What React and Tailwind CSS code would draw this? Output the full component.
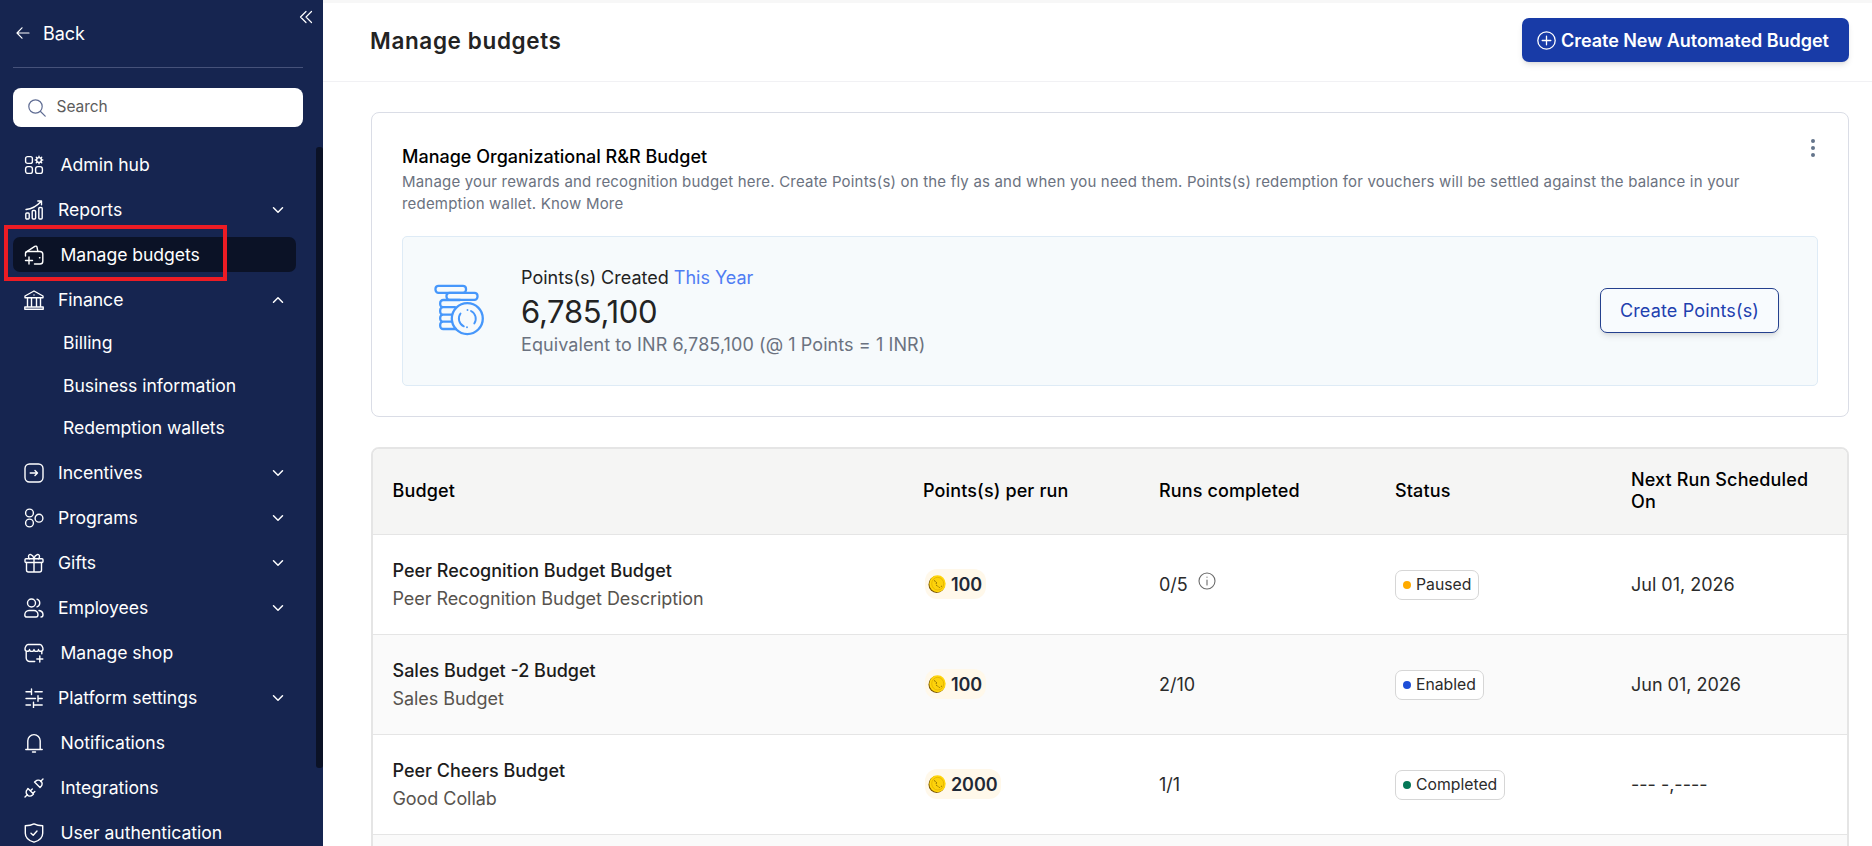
const Svg = ({ children, className = 'size-5', w = 1.4, box = '0 0 20 20' }) => (
  <svg
    viewBox={box}
    className={`shrink-0 ${className}`}
    fill="none"
    stroke="currentColor"
    strokeWidth={w}
    strokeLinecap="round"
    strokeLinejoin="round"
  >
    {children}
  </svg>
);

const icons = {
  hub: (
    <>
      <rect x="1.6" y="1.6" width="6.8" height="6.8" rx="2" />
      <rect x="1.6" y="11.6" width="6.8" height="6.8" rx="2.2" />
      <rect x="11.6" y="11.6" width="6.8" height="6.8" rx="2.2" />
      <circle cx="15" cy="5" r="2.4" />
      <path d="M15 1.2v1M15 7.800v1M11.200 5h1M17.800 5h1M12.300 2.300l.7.700M17 7l.7.700M17.700 2.300l-.7.700M13 7l-.7.700" />
    </>
  ),
  reports: (
    <>
      <rect x="1.800" y="13" width="3.400" height="6" rx="1" />
      <rect x="8.200" y="10.500" width="3.400" height="8.500" rx="1" />
      <rect x="14.800" y="7.500" width="3.400" height="11.500" rx="1" />
      <path d="M2 9.500c6-.5 10.500-3 15-8M13.800 1h3.700v3.700" />
    </>
  ),
  wallet: (
    <>
      <path d="M1.500 11V8.500a2 2 0 0 1 2-2h12.500a2.800 2.800 0 0 1 2.800 2.800v6.900a2.800 2.800 0 0 1-2.800 2.800h-5.500" />
      <path d="M2 7.200L10.800 1.400c1-.6 2-.2 2.200.8l.8 4" />
      <path d="M1.500 15.500h7M5 12v7M15.500 12.800h.4" />
    </>
  ),
  bank: (
    <path d="M1 6L10 1l9 5v1.800H1zM.8 19.200V17h18.400v2.200zM3.500 8v8.500M7.500 8v8.500M12.500 8v8.500M16.500 8v8.500M10 5h.01" />
  ),
  incentives: (
    <>
      <rect x="1" y="1" width="18" height="18" rx="4.500" />
      <path d="M6.200 10h7.300M11 7.500l2.500 2.500-2.500 2.500" />
    </>
  ),
  programs: (
    <>
      <circle cx="5.500" cy="5" r="3.900" />
      <circle cx="5.500" cy="15" r="3.900" />
      <circle cx="15" cy="10.200" r="3.900" />
    </>
  ),
  gift: (
    <>
      <rect x="1" y="5.800" width="18" height="3.700" rx="1" />
      <path d="M2.500 9.500v7.500a2 2 0 0 0 2 2h11a2 2 0 0 0 2-2V9.500M10 5.800v13.200M10 5.500c-1-4-5.500-5.500-5.500-2 0 1 .5 2 1 2.300M10 5.500c1-4 5.500-5.500 5.500-2 0 1-.5 2-1 2.300" />
    </>
  ),
  users: (
    <>
      <circle cx="7.500" cy="5" r="4" />
      <path d="M13 1.200a4 4 0 0 1 0 7.600M5 12.500h5c2.200 0 4 2 4 4.200 0 1.300-.8 2.300-2 2.300H2.800c-1.100 0-2-.9-2-2.100 0-2.400 1.900-4.400 4.200-4.400zM15 12.500c2.200.3 4 2.200 4 4.300 0 1.200-.9 2.200-2 2.200" />
    </>
  ),
  shop: (
    <path d="M4 1.500h12c1.500 0 3 3 3 4.500 0 3-4.500 3-4.500.5 0 2.500-4.500 2.500-4.500 0 0 2.500-4.500 2.500-4.500 0C5.500 9 1 9 1 6c0-1.500 1.500-4.500 3-4.500zM2.200 8.500V15a3.500 3.500 0 0 0 3.500 3.500h5M17.800 8.500v2.200M15.800 13v6M12.800 16h6" />
  ),
  sliders: (
    <path d="M2 3.800h5.500M7.500 1v5.600M11 3.800h7.200M2 10.500h9.500M14 10.500h4.200M14 7.700v5.600M2 17h4.500M9.500 14.200v5.600M9.500 17h8.700" />
  ),
  bell: (
    <path d="M1.800 16.500h16.400M3.800 16.300V7.800a6.200 6.200 0 0 1 12.400 0v8.500M8.500 19h3" />
  ),
  plug: (
    <path d="M1 19l2.500-2.500M16.500 3.500L19 1M4 10.500l5.500 5.500-1 1c-1.500 1.500-4 1.500-5.300 0s-1.500-4 0-5.300zM10.500 4l5.500 5.500 1-1c1.500-1.500 1.500-4 0-5.300s-4-1.500-5.300 0zM6.500 12.800L8.300 11M9 15.200l1.800-1.800" />
  ),
  shield: (
    <path d="M10 .9c2.500 1.300 5.500 1.800 8.700 1.800v7.500c0 4.500-3.700 7.500-8.700 9-5-1.500-8.700-4.500-8.700-9V2.700C4.500 2.700 7.500 2.200 10 .9zM7 10.200l2.200 2L13 8" />
  ),
};

const Chevron = ({ up }) => (
  <Svg className="ml-auto w-3 h-2" box="0 0 12 8" w={1.5}>
    <path d={up ? 'M1.500 6.200L6 1.800l4.500 4.400' : 'M1.500 1.800L6 6.200l4.500-4.400'} />
  </Svg>
);

const navItems = [
  { label: 'Admin hub', icon: 'hub' },
  { label: 'Reports', icon: 'reports', group: true },
  { label: 'Manage budgets', icon: 'wallet', active: true },
  {
    label: 'Finance',
    icon: 'bank',
    group: true,
    children: ['Billing', 'Business information', 'Redemption wallets'],
  },
  { label: 'Incentives', icon: 'incentives', group: true },
  { label: 'Programs', icon: 'programs', group: true },
  { label: 'Gifts', icon: 'gift', group: true },
  { label: 'Employees', icon: 'users', group: true },
  { label: 'Manage shop', icon: 'shop' },
  { label: 'Platform settings', icon: 'sliders', group: true },
  { label: 'Notifications', icon: 'bell' },
  { label: 'Integrations', icon: 'plug' },
  { label: 'User authentication', icon: 'shield' },
];

const budgets = [
  { name: 'Peer Recognition Budget Budget', desc: 'Peer Recognition Budget Description', points: '100', runs: '0/5', info: true, status: 'Paused', dot: 'bg-[#ffab00]', next: 'Jul 01, 2026' },
  { name: 'Sales Budget -2 Budget', desc: 'Sales Budget', points: '100', runs: '2/10', status: 'Enabled', dot: 'bg-[#1d4ed8]', next: 'Jun 01, 2026' },
  { name: 'Peer Cheers Budget', desc: 'Good Collab', points: '2000', runs: '1/1', status: 'Completed', dot: 'bg-[#047857]', next: '--- -,----' },
];

const columns = 'grid grid-cols-[530.5px_236px_236px_236px_1fr] items-center pl-[19.5px]';

const NavItem = ({ item }) => (
  <>
    <div
      className={`relative ml-[13px] w-[283px] h-[35px] mb-[10px] rounded-[7px] pl-[11px] pr-[12px] flex items-center ${
        item.active ? 'bg-[#0b1226]' : ''
      }`}
    >
      <Svg>{icons[item.icon]}</Svg>
      <span className={`mt-[2px] ${item.group ? 'ml-[14px]' : 'ml-[16.5px]'}`}>{item.label}</span>
      {item.group && <Chevron up={!!item.children} />}
      {item.active && (
        <div className="absolute -left-[9px] -top-[12px] w-[223px] h-[56px] border-4 border-[#ed1c24]" />
      )}
    </div>
    {item.children && (
      <div className="pl-[63px] -mt-[5px] mb-[5.5px]">
        {item.children.map((child) => (
          <div key={child} className="h-[42.500px] flex items-center">{child}</div>
        ))}
      </div>
    )}
  </>
);

const Sidebar = () => (
  <aside className="relative w-[323px] h-full shrink-0 bg-[#162550] text-white text-[17.6px] tracking-[-0.04px] overflow-hidden">
    <Svg className="absolute left-[299px] top-[10px] w-[14px] h-[14px]" box="0 0 14 14" w={1.2}>
      <path d="M7 1.500L1.500 7 7 12.500M12.500 1.500L7 7l5.500 5.500" />
    </Svg>
    <div className="mx-[13px] w-[290px] h-[68px] border-b border-[#46527a] flex items-center pb-[1px]">
      <Svg className="ml-[3px] w-[14px] h-[14px]" box="0 0 14 14" w={1.2}>
        <path d="M13 7H1M6 1.800L1 7l5 5.200" />
      </Svg>
      <span className="ml-[13px] text-[18px]">Back</span>
    </div>
    <div className="mx-[13px] mt-[20px] w-[290px] h-[39px] rounded-[8px] bg-white flex items-center pl-[15px]">
      <Svg className="size-[18px] text-[#5f6c93]" box="0 0 18 18" w={1.200}>
        <circle cx="7.500" cy="7.500" r="6.700" />
        <path d="M12.500 12.500l4.700 4.700" />
      </Svg>
      <span className="ml-[10.5px] mb-[2px] text-[15.5px] text-[#5c5c5c]">Search</span>
    </div>
    <nav className="mt-[20px]">
      {navItems.map((item) => (
        <NavItem key={item.label} item={item} />
      ))}
    </nav>
    <div className="absolute right-0 top-[147px] w-[7px] h-[621px] rounded-[3px] bg-[#0b1226]" />
  </aside>
);

const CoinStack = () => (
  <Svg className="ml-[31px] mb-[2px] size-[52px] text-[#4697fb]" box="0 0 52 52" w={2.300}>
    <rect x="1.500" y="1.800" width="30.500" height="7" rx="3" />
    <rect x="12.500" y="8.800" width="31" height="7" rx="3" />
    <path d="M26 16H9.200a3 3 0 0 0-3 3v1.200a3 3 0 0 0 3 3H21M9.200 23.200a3 3 0 0 0-3 3v1.500a3 3 0 0 0 3 3H18M9.200 30.700a3 3 0 0 0-3 3v1a3 3 0 0 0 3 3H18M9.200 37.700a3 3 0 0 0-3 3V42a3 3 0 0 0 3 3H22" />
    <circle cx="33.300" cy="34.600" r="15.500" />
    <path d="M26.500 29.500a8.600 8.600 0 0 0 3.300 12.800M37 27a8.600 8.600 0 0 1 3.300 12.500M33.500 26h.01M33 43.200h.01" strokeWidth={1.900} />
  </Svg>
);

const Coin = () => (
  <svg viewBox="0 0 18 18" className="size-[18px] shrink-0">
    <ellipse cx="8.700" cy="9.400" rx="8.200" ry="8.500" fill="#7a5500" />
    <ellipse cx="9.500" cy="8.800" rx="8.200" ry="8.500" fill="#ffd60a" />
    <ellipse cx="9.700" cy="8.700" rx="6" ry="6.400" fill="#fcd20c" stroke="#e2ae00" strokeWidth="0.800" />
    <path d="M6 5.500l2.500 1.500-.5 3 3.500 2.500 2.500-1.500" fill="none" stroke="#8a6a00" strokeWidth="0.900" strokeDasharray="2 1" />
  </svg>
);

const App = () => {
  return (
    <div className="w-[1872px] h-[846px] flex bg-white overflow-hidden font-['Inter',sans-serif]">
      <Sidebar />

      <main className="flex-1 min-w-0">
        <header className="h-[82px] border-t-[3px] border-t-[#f7f7f7] border-b border-b-[#f1f1f4] pl-[47px] pr-[23px] pb-[4px] flex items-center justify-between">
          <h1 className="mt-[2px] text-[22.500px] font-semibold tracking-[0.63px] text-[#232323]">Manage budgets</h1>
          <button className="w-[327px] h-[44px] rounded-[7px] bg-[#183ba7] text-white text-[18px] font-semibold tracking-[-0.04px] shadow-md pl-[15px] flex items-center">
            <Svg className="size-[19px]" box="0 0 19 19" w={1.300}>
              <circle cx="9.500" cy="9.500" r="8.700" />
              <path d="M9.500 5.200v8.600M5.200 9.500h8.600" />
            </Svg>
            <span className="ml-[5px]">Create New Automated Budget</span>
          </button>
        </header>

        {/* Organizational budget */}
        <section className="ml-[48px] mr-[23px] mt-[30px] h-[305px] border border-[#dadde6] rounded-[8px] px-[30px] pt-[33px]">
          <div className="flex justify-between h-[90px]">
            <div className="w-[1360px]">
              <h2 className="text-[18px] leading-[22px] font-medium text-black">Manage Organizational R&amp;R Budget</h2>
              <p className="mt-[3px] text-[15px] leading-[22px] tracking-[0.19px] text-[#6b7280]">
                Manage your rewards and recognition budget here. Create Points(s) on the fly as and when you need them. Points(s) redemption for vouchers will be settled against the balance in your redemption wallet. Know More
              </p>
            </div>
            <svg viewBox="0 0 4 18" className="w-[4px] h-[18px] -mt-[7px] mr-[3px] text-[#64748b]" fill="currentColor">
              <circle cx="2" cy="2" r="2" />
              <circle cx="2" cy="9" r="2" />
              <circle cx="2" cy="16" r="2" />
            </svg>
          </div>
          <div className="h-[150px] rounded-[5px] border border-[#deebf6] bg-[#f6fafc] flex items-center">
            <CoinStack />
            <div className="ml-[35px]">
              <p className="text-[18px] leading-[24px] text-[#232323]">
                Points(s) Created <span className="text-[#4f7df3]">This Year</span>
              </p>
              <p className="text-[31px] leading-[44px] tracking-[-0.3px] text-[#232323]">6,785,100</p>
              <p className="text-[18px] leading-[22px] tracking-[0.08px] text-[#6b7280]">Equivalent to INR 6,785,100 (@ 1 Points = 1 INR)</p>
            </div>
            <button className="ml-auto mr-[38px] mb-[1px] w-[179px] h-[45px] rounded-[7px] border border-[#24408e] bg-[#f8fbfe] text-[18px] tracking-[0.15px] text-[#1e40af] shadow-md">
              Create Points(s)
            </button>
          </div>
        </section>

        {/* Automated budgets */}
        <section className="ml-[48px] mr-[23px] mt-[30px] h-[460px] border-2 border-[#e5e5e5] rounded-t-[8px] overflow-hidden text-[18px]">
          <div className={`${columns} h-[86px] pb-[1px] bg-[#f5f5f4] border-b border-[#e5e5e5] font-medium tracking-[0.13px] text-black leading-[22px]`}>
            <span>Budget</span>
            <span>Points(s) per run</span>
            <span>Runs completed</span>
            <span>Status</span>
            <span>Next Run Scheduled<br />On</span>
          </div>
          {budgets.map((b) => (
            <div key={b.name} className={`${columns} h-[100px] border-b border-[#e5e5e5] text-[#2b2b2b] even:bg-white odd:bg-[#fafafa]`}>
              <div>
                <p className="leading-[27px] mb-[1px] font-medium text-[#1c1c1c]">{b.name}</p>
                <p className="leading-[27px] tracking-[-0.06px] text-[#57534e]">{b.desc}</p>
              </div>
              <div>
                <span className="ml-[2px] inline-flex items-center h-[30px] rounded-[12px] bg-[#fff8ea] pl-[3px] pr-[4px] font-semibold tracking-[-0.1px] text-[#1f2937]">
                  <Coin />
                  <span className="ml-[5px]">{b.points}</span>
                </span>
              </div>
              <div className="flex items-center">
                {b.runs}
                {b.info && (
                  <Svg className="ml-[10px] mb-[8px] size-[18px] text-[#6b6b6b]" box="0 0 18 18" w={1.100}>
                    <circle cx="9" cy="9" r="8" />
                    <path d="M9 8v5M9 5v.2" />
                  </Svg>
                )}
              </div>
              <div>
                <span className="inline-flex items-center h-[30px] rounded-[7px] border border-[#d6d6d6] bg-white px-[7px] text-[15.750px]">
                  <span className={`size-2 rounded-full mr-[5px] ${b.dot}`} />
                  {b.status}
                </span>
              </div>
              <div>{b.next}</div>
            </div>
          ))}
          <div className="h-[100px] bg-[#fafafa]" />
        </section>
      </main>
    </div>
  );
};

export default App;
